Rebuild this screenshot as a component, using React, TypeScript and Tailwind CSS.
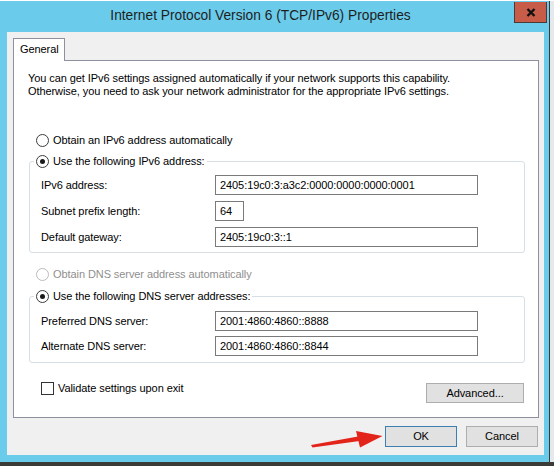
import React from "react";

function Radio({ checked, disabled }: { checked?: boolean; disabled?: boolean }) {
  return (
    <span
      className={
        disabled
          ? "inline-flex h-[13px] w-[13px] shrink-0 items-center justify-center rounded-full border border-[#bcbcbc] bg-white"
          : "inline-flex h-[13px] w-[13px] shrink-0 items-center justify-center rounded-full border border-[#3c3c3c] bg-white"
      }
    >
      {checked && <span className="h-[5px] w-[5px] rounded-full bg-[#1a1a1a]" />}
    </span>
  );
}

function TextBox({ value, wide }: { value: string; wide?: boolean }) {
  return (
    <div
      className={
        wide
          ? "h-[20px] w-[263px] border border-[#7a7a7a] bg-white pl-[4px] text-[11px] leading-[18px] text-black"
          : "h-[20px] w-[29px] border border-[#7a7a7a] bg-white pl-[4px] text-[11px] leading-[18px] text-black"
      }
    >
      {value}
    </div>
  );
}

function Row({ label, value, wide = true }: { label: string; value: string; wide?: boolean }) {
  return (
    <div className="flex h-[20px] items-center">
      <div className="w-[174px] text-[11px] leading-[13px] text-black">{label}</div>
      <TextBox value={value} wide={wide} />
    </div>
  );
}

function Button({ children, primary }: { children: React.ReactNode; primary?: boolean }) {
  return (
    <div
      className={
        primary
          ? "flex h-[21px] w-[72px] items-center justify-center border border-[#3c7fb1] bg-[#e1e1e1] text-[11px] text-black"
          : "flex h-[21px] w-[72px] items-center justify-center border border-[#adadad] bg-[#e1e1e1] text-[11px] text-black"
      }
    >
      {children}
    </div>
  );
}

export default function App() {
  return (
    <div className="relative flex h-[466px] w-[554px] flex-col overflow-hidden bg-[#e6e9ec] font-['Liberation_Sans',Arial,sans-serif]">
      <div className="h-[1px] w-full bg-white" />
      <div className="flex h-[461px]">
        <div className="flex h-[461px] w-[549px] flex-col bg-[#6bcbea]">
          {/* Title bar */}
          <div className="relative flex h-[31px] items-center justify-center pr-[28px]">
            <span className="text-[13.75px] text-[#1e1e1e]">Internet Protocol Version 6 (TCP/IPv6) Properties</span>
            <div className="absolute right-[2px] top-[1px] flex h-[21px] w-[33px] items-center justify-center border border-t-0 border-[#4b3a37] bg-[#c75c48]">
              <svg width="10" height="9" viewBox="0 0 10 9">
                <path d="M1.5 1 L8.5 8 M8.5 1 L1.5 8" stroke="#111" strokeWidth="2.4" />
              </svg>
            </div>
          </div>
          {/* Content */}
          <div className="ml-[7px] flex h-[423px] w-[537px] flex-col bg-[#f0f0f0] pl-[6px] pr-[5px] pt-[6px] tracking-[-0.08px]">
            <div className="relative z-10 -mb-[1px] flex h-[23px] w-[52px] items-center border border-b-0 border-[#8e8f9f] bg-white pb-[1px] pl-[6px] text-[11px] text-black">
              General
            </div>
            <div className="flex h-[358px] flex-col border border-[#8e8f9f] bg-white">
              <div className="pl-[14px] pt-[11px] text-[11px] leading-[13px] text-black">
                <div>You can get IPv6 settings assigned automatically if your network supports this capability.</div>
                <div>Otherwise, you need to ask your network administrator for the appropriate IPv6 settings.</div>
              </div>

              <div className="mt-[34px] flex h-[16px] items-center gap-[4px] pl-[22px] text-[11px] text-black">
                <Radio />
                <span>Obtain an IPv6 address automatically</span>
              </div>

              <fieldset className="ml-[15px] mr-[13px] mt-[5px] rounded-[3px] border border-[#d5dfe5] pl-[4px]">
                <legend className="px-[2px]">
                  <span className="flex h-[16px] items-center gap-[4px] text-[11px] text-black">
                    <Radio checked />
                    <span>Use the following IPv6 address:</span>
                  </span>
                </legend>
                <div className="flex flex-col gap-[6px] pb-[5px] pl-[7px] pt-[6px]">
                  <Row label="IPv6 address:" value="2405:19c0:3:a3c2:0000:0000:0000:0001" />
                  <Row label="Subnet prefix length:" value="64" wide={false} />
                  <Row label="Default gateway:" value="2405:19c0:3::1" />
                </div>
              </fieldset>

              <div className="mt-[13px] flex h-[16px] items-center gap-[4px] pl-[22px] text-[11px] text-[#8f8f8f]">
                <Radio disabled />
                <span>Obtain DNS server address automatically</span>
              </div>

              <fieldset className="ml-[15px] mr-[13px] mt-[6px] rounded-[3px] border border-[#d5dfe5] pl-[4px]">
                <legend className="px-[2px]">
                  <span className="flex h-[16px] items-center gap-[4px] text-[11px] text-black">
                    <Radio checked />
                    <span>Use the following DNS server addresses:</span>
                  </span>
                </legend>
                <div className="flex flex-col gap-[5px] pb-[6px] pl-[7px] pt-[7px]">
                  <Row label="Preferred DNS server:" value="2001:4860:4860::8888" />
                  <Row label="Alternate DNS server:" value="2001:4860:4860::8844" />
                </div>
              </fieldset>

              <div className="mt-[19px] flex h-[21px] items-start justify-between pl-[27px] pr-[14px]">
                <div className="flex h-[13px] items-center gap-[4px] text-[11px] text-black">
                  <span className="h-[13px] w-[13px] border border-[#333] bg-white" />
                  <span>Validate settings upon exit</span>
                </div>
                <div className="mt-[1px] flex h-[20px] w-[98px] items-center justify-center border border-[#adadad] bg-[#e1e1e1] text-[11px] text-black">
                  Advanced...
                </div>
              </div>
            </div>

            <div className="mt-[8px] flex justify-end gap-[9px] pr-[1px]">
              <Button primary>OK</Button>
              <Button>Cancel</Button>
            </div>
          </div>
        </div>
        <div className="h-[461px] w-[1px] bg-[#3a3a3a]" />
        <div className="h-[461px] flex-1 bg-[#e6e9ec]" />
      </div>
      <div className="h-[4px] w-full bg-[#3a3a36]" />

      <svg className="pointer-events-none absolute left-0 top-0" width="554" height="466" viewBox="0 0 554 466">
        <path d="M311 445 L358 436.5 L359.5 441 L312.5 447.5 Z" fill="#e3241b" />
        <path d="M356 431 L382.5 436 L360 447.5 Z" fill="#e3241b" />
      </svg>
    </div>
  );
}
